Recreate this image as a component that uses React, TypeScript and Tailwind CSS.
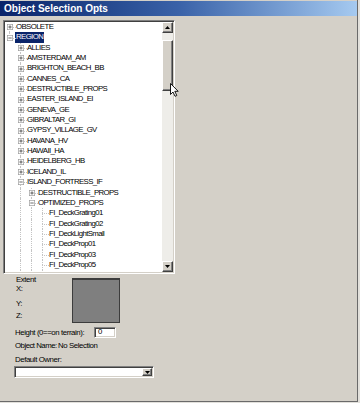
import React from 'react';

type Node = { label: string; level: number; kind: 'plus' | 'minus' | 'leaf'; selected?: boolean };

const l1 = [
    'ALLIES', 'AMSTERDAM_AM', 'BRIGHTON_BEACH_BB', 'CANNES_CA', 'DESTRUCTIBLE_PROPS', 'EASTER_ISLAND_EI',
    'GENEVA_GE', 'GIBRALTAR_GI', 'GYPSY_VILLAGE_GV', 'HAVANA_HV', 'HAWAII_HA', 'HEIDELBERG_HB', 'ICELAND_IL',
];
const leaves = [
    'FI_DeckGrating01', 'FI_DeckGrating02', 'FI_DeckLightSmall', 'FI_DeckProp01', 'FI_DeckProp03',
    'FI_DeckProp05', 'FI_DeckProp06', 'FI_DeckProp07',
];

const nodes: Node[] = [
    { label: 'OBSOLETE', level: 0, kind: 'plus' },
    { label: 'REGION', level: 0, kind: 'minus', selected: true },
    ...l1.map((label) => ({ label, level: 1, kind: 'plus' as const })),
    { label: 'ISLAND_FORTRESS_IF', level: 1, kind: 'minus' },
    { label: 'DESTRUCTIBLE_PROPS', level: 2, kind: 'plus' },
    { label: 'OPTIMIZED_PROPS', level: 2, kind: 'minus' },
    ...leaves.map((label) => ({ label, level: 3, kind: 'leaf' as const })),
];

// which indent columns still have a vertical guide running through them
const guide = (col: number) => col >= 1;

function Expander({ open }: { open: boolean }) {
    return (
        <svg width="6" height="6" viewBox="0 0 9 9" className="absolute left-[1.5px] top-[2.2px] bg-white">
            <rect x="0.5" y="0.5" width="8" height="8" fill="#fff" stroke="#9a9a9a" />
            <line x1="2" y1="4.5" x2="7" y2="4.5" stroke="#222" />
            {!open && <line x1="4.5" y1="2" x2="4.5" y2="7" stroke="#222" />}
        </svg>
    );
}

const line = 'absolute border-dotted border-[#c4c4c4]';

function Row({ node, index }: { node: Node; index: number }) {
    const cols = Array.from({ length: node.level });
    const up = !(node.level === 0 && index === 0);
    const down = !(node.level === 0 && index === 1);
    return (
        <div className="h-[10.35px] flex items-stretch shrink-0">
            {cols.map((_, c) => (
                <div key={c} className="w-[11px] relative shrink-0">
                    {guide(c) && <div className={line + ' left-[4px] top-0 bottom-0 border-l'} />}
                </div>
            ))}
            <div className="w-[11px] relative shrink-0">
                {up && <div className={line + ' left-[4px] top-0 h-1/2 border-l'} />}
                {down && <div className={line + ' left-[4px] top-1/2 bottom-0 border-l'} />}
                <div className={line + ' left-[4px] right-0 top-1/2 border-t'} />
                {node.kind !== 'leaf' && <Expander open={node.kind === 'minus'} />}
            </div>
            <span
                className={
                    'ml-[-1px] px-px leading-[10.35px] whitespace-nowrap ' +
                    (node.selected ? 'bg-[#0a246a] text-white' : 'text-black')
                }
            >
                {node.label}
            </span>
        </div>
    );
}

function Arrow({ down }: { down?: boolean }) {
    return (
        <svg width="5" height="3" viewBox="0 0 5 3" className={down ? '' : 'rotate-180'}>
            <path d="M0 0 H5 L2.5 3 Z" fill="#000" />
        </svg>
    );
}

const btn =
    'bg-[#d4d0c8] border border-t-white border-l-white border-b-[#404040] border-r-[#404040] shadow-[inset_-1px_-1px_0_#808080] flex items-center justify-center';

function Scrollbar() {
    return (
        <div className="w-[11px] flex flex-col bg-[#eeede9] shrink-0">
            <div className={btn + ' h-[11px]'}>
                <Arrow />
            </div>
            <div className="h-[7px]" />
            <div className={btn + ' h-[51px]'} />
            <div className="flex-1" />
            <div className={btn + ' h-[11px]'}>
                <Arrow down />
            </div>
        </div>
    );
}

const sunken =
    'border border-t-[#808080] border-l-[#808080] border-b-white border-r-white shadow-[inset_1px_1px_0_#404040,inset_-1px_-1px_0_#d4d0c8]';

export default function App() {
    return (
        <div className="w-[360px] h-[403px] bg-[#e2e0db] font-['Liberation_Sans',sans-serif] text-[7.8px] tracking-[-0.4px]">
            <div className="w-[358px] h-[402px] bg-[#d4d0c8] border-r border-b border-[#6a6a6a] flex flex-col relative">
                <div className="mt-px h-[15px] bg-linear-to-r from-[#0a246a] via-[#3a62a8] to-[#a6caf0] pl-[4px] text-white font-bold text-[10px] tracking-normal leading-[15px]">
                    Object Selection Opts
                </div>

                <div className={sunken + ' ml-[3px] mt-[4px] w-[172px] h-[254px] p-px flex bg-white'}>
                    <div className="flex-1 flex flex-col overflow-hidden text-[7.8px] tracking-[-0.6px]">
                        {nodes.map((n, i) => (
                            <Row key={i} node={n} index={i} />
                        ))}
                    </div>
                    <Scrollbar />
                </div>

                <div className="flex mt-px whitespace-nowrap">
                    <div className="w-[72px] pl-[16px] flex flex-col text-black">
                        <div className="h-[9px] leading-[9px]">Extent</div>
                        <div className="h-[9px] leading-[9px]">X:</div>
                        <div className="h-[9px] leading-[9px] mt-[5.5px]">Y:</div>
                        <div className="h-[9px] leading-[9px] mt-[3.5px]">Z:</div>
                    </div>
                    <div className="mt-[3px] w-[48px] h-[45px] bg-[#7f7f7f] border border-[#3c3c3c] border-t-2" />
                </div>

                <div className="flex items-center mt-[4px] h-[11px] pl-[15px] text-black whitespace-nowrap">
                    <span className="w-[79px] shrink-0">Height (0==on terrain):</span>
                    <div className={sunken + ' w-[22px] h-[11px] bg-white pl-[3px] leading-[8px]'}>0</div>
                </div>

                <div className="flex h-[9px] leading-[9px] mt-[2.5px] pl-[15px] text-black whitespace-nowrap">
                    <span className="w-[43px] shrink-0 tracking-[-0.5px]">Object Name:</span>
                    <span>No Selection</span>
                </div>

                <div className="h-[9px] leading-[9px] mt-[5px] pl-[15px] text-black whitespace-nowrap">Default Owner:</div>

                <div className={sunken + ' ml-[14px] mt-[2.5px] w-[140px] h-[12px] bg-white flex justify-end p-px'}>
                    <div className={btn + ' w-[10px] h-full'}>
                        <Arrow down />
                    </div>
                </div>

                <svg width="9" height="14" viewBox="0 0 9 14" className="absolute left-[170px] top-[83px]">
                    <path d="M0.5 0.5 V11.5 L3 9 L5 13.3 L6.8 12.5 L4.8 8.3 H8.2 Z" fill="#fff" stroke="#000" strokeWidth="0.9" strokeLinejoin="round" />
                </svg>
            </div>
        </div>
    );
}
